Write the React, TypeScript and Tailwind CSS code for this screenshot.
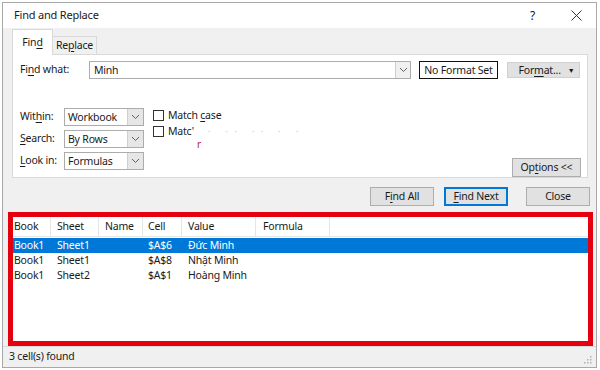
import React from "react";

const Chevron = () => (
  <svg width="9" height="6" viewBox="0 0 9 6" fill="none">
    <path d="M1 1l3.5 3.5L8 1" stroke="#606060" strokeWidth="1" />
  </svg>
);

const U = ({ children }: { children: React.ReactNode }) => (
  <span className="underline underline-offset-[2px] decoration-[1px]">{children}</span>
);

const Select = ({ value }: { value: string }) => (
  <div className="w-[80px] h-[18px] border border-[#acacac] bg-white flex">
    <div className="flex-1 pl-[3px] flex items-center leading-none">{value}</div>
    <div className="w-[16px] bg-[#e6e6e6] border-l border-[#cfcfcf] flex items-center justify-center">
      <Chevron />
    </div>
  </div>
);

const Button = ({
  children,
  w,
  primary,
}: {
  children: React.ReactNode;
  w: string;
  primary?: boolean;
}) => (
  <div
    className={`${w} h-[19px] flex items-center justify-center bg-[#e1e1e1] leading-none ${
      primary ? "border-2 border-[#0078d7]" : "border border-[#adadad]"
    }`}
  >
    {children}
  </div>
);

const columns = [
  { name: "Book", w: "w-[38px]", pad: "pl-[1px]" },
  { name: "Sheet", w: "w-[48px]", pad: "pl-[6px]" },
  { name: "Name", w: "w-[44px]", pad: "pl-[6px]" },
  { name: "Cell", w: "w-[39px]", pad: "pl-[5px]" },
  { name: "Value", w: "w-[74px]", pad: "pl-[6px]" },
  { name: "Formula", w: "w-[74px]", pad: "pl-[7px]" },
];

const results = [
  ["Book1", "Sheet1", "", "$A$6", "Đức Minh", ""],
  ["Book1", "Sheet1", "", "$A$8", "Nhật Minh", ""],
  ["Book1", "Sheet2", "", "$A$1", "Hoàng Minh", ""],
];

export default function App() {
  return (
    <div
      className="w-[600px] h-[370px] bg-white overflow-hidden text-[10.5px] tracking-[-0.2px] text-[#1a1a1a]"
      style={{ fontFamily: '"Noto Sans", "Open Sans", sans-serif' }}
    >
      <div className="ml-[2px] mt-[2px] w-[595px] h-[366px] border border-[#a8a8a8] bg-[#f0f0f0] flex flex-col">
        {/* title bar */}
        <div className="h-[25px] bg-white flex items-center pl-[11px] pr-[14px] text-[11px]">
          <span>Find and Replace</span>
          <span className="ml-auto mr-[36px] text-[12px]">?</span>
          <svg width="11" height="11" viewBox="0 0 11 11">
            <path d="M0.5 0.5l10 10M10.5 0.5l-10 10" stroke="#333" strokeWidth="1" />
          </svg>
        </div>

        <div className="pl-[9px] pr-[6px]">
          {/* tabs */}
          <div className="h-[27px] flex items-end -mb-px relative z-10">
            <div className="w-[41px] h-[26px] bg-white border border-b-0 border-[#d9d9d9] flex items-center justify-center">
              Fin<U>d</U>
            </div>
            <div className="w-[44px] h-[19px] border border-l-0 border-[#d9d9d9] bg-[#f0f0f0] flex items-center justify-center">
              Re<U>p</U>lace
            </div>
          </div>

          {/* panel */}
          <div className="w-[576px] h-[124px] bg-white border border-[#d9d9d9] pt-[6px] pl-[7px] pr-[6px] flex flex-col">
            <div className="flex items-center h-[18px]">
              <div className="w-[69px]">
                Fi<U>n</U>d what:
              </div>
              <div className="w-[322px] h-[18px] border border-[#acacac] flex">
                <div className="flex-1 pl-[4px] flex items-center leading-none">Minh</div>
                <div className="w-[15px] border-l border-[#cfcfcf] bg-[#f0f0f0] flex items-center justify-center">
                  <Chevron />
                </div>
              </div>
              <div className="ml-[8px] w-[79px] h-[18px] border border-[#111] flex items-center justify-center leading-none">
                No Format Set
              </div>
              <div className="ml-[9px] w-[73px] h-[16px] bg-[#e1e1e1] border border-[#d0d0d0] flex items-center justify-center leading-none">
                <span className="ml-[6px]">
                  For<U>m</U>at...
                </span>
                <span className="ml-[7px] text-[7px]">▼</span>
              </div>
            </div>

            <div className="flex mt-[29px] flex-1">
              <div className="flex flex-col gap-[4px]">
                <div className="flex items-center">
                  <div className="w-[44px]">
                    Wit<U>h</U>in:
                  </div>
                  <Select value="Workbook" />
                </div>
                <div className="flex items-center">
                  <div className="w-[44px]">
                    <U>S</U>earch:
                  </div>
                  <Select value="By Rows" />
                </div>
                <div className="flex items-center">
                  <div className="w-[44px]">
                    <U>L</U>ook in:
                  </div>
                  <Select value="Formulas" />
                </div>
              </div>

              <div className="ml-[9px] pt-[2px] flex flex-col gap-[6px]">
                <div className="flex items-center h-[10px]">
                  <div className="w-[11px] h-[11px] border border-[#333] bg-white" />
                  <span className="ml-[4px] leading-none">
                    Match <U>c</U>ase
                  </span>
                </div>
                <div className="flex items-center h-[10px]">
                  <div className="w-[11px] h-[11px] border border-[#333] bg-white" />
                  <span className="ml-[4px] leading-none">Matc'</span>
                  <span className="ml-[14px] text-[#d4d4d4] leading-none tracking-[6px]">· ·· ·· · ·</span>
                </div>
                <div className="pl-[44px] -mt-[3px] text-[#b8283c] text-[10px] leading-none">r</div>
              </div>

              <div className="ml-auto self-end">
                <Button w="w-[69px]">
                  Op<U>t</U>ions &lt;&lt;
                </Button>
              </div>
            </div>
          </div>

          {/* buttons */}
          <div className="flex justify-end mt-[9px]">
            <Button w="w-[64px]">
              F<U>i</U>nd All
            </Button>
            <div className="ml-[10px]">
              <Button w="w-[64px]" primary>
                <U>F</U>ind Next
              </Button>
            </div>
            <div className="ml-[18px]">
              <Button w="w-[64px]">Close</Button>
            </div>
          </div>
        </div>

        {/* results list */}
        <div className="ml-[5px] mt-[6px] w-[585px] h-[134px] border-[5px] border-[#e5000f] bg-white flex flex-col">
          <div className="h-[20px] flex border-b border-[#e5e5e5]">
            {columns.map((c) => (
              <div
                key={c.name}
                className={`${c.w} ${c.pad} flex items-center border-r border-[#e5e5e5]`}
              >
                {c.name}
              </div>
            ))}
          </div>
          <div className="mt-[1px] flex flex-col">
            {results.map((r, i) => (
              <div
                key={i}
                className={`h-[15px] flex items-center ${
                  i === 0 ? "bg-[#0078d7] text-white" : ""
                }`}
              >
                {r.map((v, j) => (
                  <div key={j} className={`${columns[j].w} ${columns[j].pad} leading-none`}>
                    {v}
                  </div>
                ))}
              </div>
            ))}
          </div>
        </div>

        {/* status bar */}
        <div className="flex-1 border-t border-[#d9d9d9] flex items-center pl-[6px] relative">
          <span>3 cell(s) found</span>
          <svg className="absolute right-[4px] bottom-[3px]" width="8" height="8" viewBox="0 0 8 8">
            <rect x="6" y="0" width="1.5" height="1.5" fill="#b0b0b0" />
            <rect x="3" y="3" width="1.5" height="1.5" fill="#b0b0b0" />
            <rect x="6" y="3" width="1.5" height="1.5" fill="#b0b0b0" />
            <rect x="0" y="6" width="1.5" height="1.5" fill="#b0b0b0" />
            <rect x="3" y="6" width="1.5" height="1.5" fill="#b0b0b0" />
            <rect x="6" y="6" width="1.5" height="1.5" fill="#b0b0b0" />
          </svg>
        </div>
      </div>
    </div>
  );
}
